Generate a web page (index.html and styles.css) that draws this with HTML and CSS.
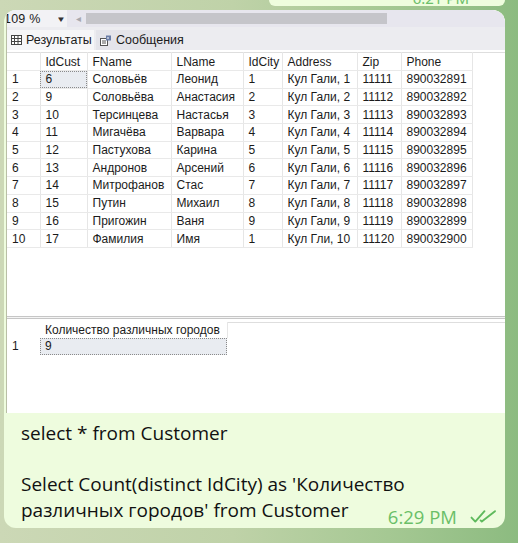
FILE: index.html
```html
<!DOCTYPE html>
<html lang="ru">
<head>
<meta charset="utf-8">
<title>Telegram — SSMS</title>
<link rel="stylesheet" href="styles.css">
</head>
<body>
<div class="wall">
  <div class="prev-bubble"><span class="prev-time">6:21 PM</span></div>
  <div class="bubble">
    <div class="shot">
      <div class="toolbar">
        <div class="zoombox"><span class="zoomval">109 %</span><span class="caret">▾</span></div>
        <span class="sarrow">◂</span>
        <div class="track"><div class="thumb"></div></div>
      </div>
      <div class="tabs">
        <div class="tab active">
          <svg class="ico" width="11" height="10" viewBox="0 0 11 10"><rect x="0.5" y="0.5" width="10" height="9" fill="#fff" stroke="#444"/><path d="M0.5 3.5h10M0.5 6.5h10M3.5 0.5v9M7 0.5v9" stroke="#444" stroke-width="1"/></svg>
          <span>Результаты</span>
        </div>
        <div class="tab">
          <svg class="ico" width="12" height="11" viewBox="0 0 12 11"><rect x="0.5" y="3.5" width="7" height="7" fill="#fff" stroke="#555"/><path d="M2 6h4M2 8h4" stroke="#555"/><rect x="6" y="0.5" width="5" height="5" fill="#6b7ea8"/><path d="M8 2v2" stroke="#fff"/></svg>
          <span>Сообщения</span>
        </div>
      </div>
      <div class="grid-pane">
        <table class="grid">
          <colgroup><col class="c-n"><col class="c-id"><col class="c-fn"><col class="c-ln"><col class="c-city"><col class="c-addr"><col class="c-zip"><col class="c-ph"><col class="c-rest"></colgroup>
          <thead><tr><th></th><th>IdCust</th><th>FName</th><th>LName</th><th>IdCity</th><th>Address</th><th>Zip</th><th>Phone</th><th class="rest"></th></tr></thead>
          <tbody>
            <tr><td>1</td><td class="sel">6</td><td>Соловьёв</td><td>Леонид</td><td>1</td><td>Кул Гали, 1</td><td>11111</td><td>890032891</td><td class="rest"></td></tr>
            <tr><td>2</td><td>9</td><td>Соловьёва</td><td>Анастасия</td><td>2</td><td>Кул Гали, 2</td><td>11112</td><td>890032892</td><td class="rest"></td></tr>
            <tr><td>3</td><td>10</td><td>Терсинцева</td><td>Настасья</td><td>3</td><td>Кул Гали, 3</td><td>11113</td><td>890032893</td><td class="rest"></td></tr>
            <tr><td>4</td><td>11</td><td>Мигачёва</td><td>Варвара</td><td>4</td><td>Кул Гали, 4</td><td>11114</td><td>890032894</td><td class="rest"></td></tr>
            <tr><td>5</td><td>12</td><td>Пастухова</td><td>Карина</td><td>5</td><td>Кул Гали, 5</td><td>11115</td><td>890032895</td><td class="rest"></td></tr>
            <tr><td>6</td><td>13</td><td>Андронов</td><td>Арсений</td><td>6</td><td>Кул Гали, 6</td><td>11116</td><td>890032896</td><td class="rest"></td></tr>
            <tr><td>7</td><td>14</td><td>Митрофанов</td><td>Стас</td><td>7</td><td>Кул Гали, 7</td><td>11117</td><td>890032897</td><td class="rest"></td></tr>
            <tr><td>8</td><td>15</td><td>Путин</td><td>Михаил</td><td>8</td><td>Кул Гали, 8</td><td>11118</td><td>890032898</td><td class="rest"></td></tr>
            <tr><td>9</td><td>16</td><td>Пригожин</td><td>Ваня</td><td>9</td><td>Кул Гали, 9</td><td>11119</td><td>890032899</td><td class="rest"></td></tr>
            <tr><td>10</td><td>17</td><td>Фамилия</td><td>Имя</td><td>1</td><td>Кул Гли, 10</td><td>11120</td><td>890032900</td><td class="rest"></td></tr>
          </tbody>
        </table>
      </div>
      <div class="splitter"></div>
      <div class="grid-pane second">
        <table class="grid grid2">
          <colgroup><col class="c-n"><col class="c-cnt"><col class="c-rest"></colgroup>
          <thead><tr><th class="nb"></th><th>Количество различных городов</th><th class="rest nb"></th></tr></thead>
          <tbody><tr><td class="nb">1</td><td class="sel">9</td><td class="rest nb"></td></tr></tbody>
        </table>
      </div>
    </div>
    <div class="msg">
      <p class="line">select * from Customer</p>
      <p class="line">&nbsp;</p>
      <p class="line">Select Count(distinct IdCity) as 'Количество</p>
      <div class="line last"><span>различных городов' from Customer</span><span class="meta"><span class="time">6:29 PM</span><svg class="checks" width="27" height="15" viewBox="0 0 27 15"><path d="M1.5 8.6l3.8 4L14.5 2.2M10.6 11.4l1.2 1.2L25 2.2" fill="none" stroke="#5fba5d" stroke-width="1.9" stroke-linecap="round" stroke-linejoin="round"/></svg></span></div>
    </div>
  </div>
</div>
</body>
</html>
```
FILE: styles.css
```css
html, body {
  margin: 0;
  padding: 0;
}
body {
  width: 518px;
  height: 543px;
  overflow: hidden;
  background: linear-gradient(90deg, #ccd8b6 0%, #bfd2a8 45%, #a5c893 75%, #8cbb80 100%);
  font-family: "Noto Sans", "Open Sans", sans-serif;
}
.wall {
  display: flex;
  flex-direction: column;
  padding-right: 13px;
}
.prev-bubble {
  align-self: flex-end;
  width: 236px;
  height: 6px;
  background: #effdde;
  border-radius: 0 0 12px 12px;
  overflow: hidden;
  position: relative;
}
.prev-time {
  position: absolute;
  right: 36px;
  top: -12px;
  font-size: 15px;
  color: #6cbf6a;
}
.bubble {
  margin: 4px 0 0 4px;
  width: 501px;
  background: #eefcde;
  border-radius: 12px;
  overflow: hidden;
}
.shot {
  margin-left: 2px;
  height: 403px;
  background: #fff;
  border-left: 1px solid #b9bfa6;
  border-top-left-radius: 4px;
  border-top-right-radius: 12px;
  overflow: hidden;
  display: flex;
  flex-direction: column;
  font-family: "Liberation Sans", "Noto Sans", sans-serif;
  color: #1b1b1b;
}
.toolbar {
  height: 17px;
  flex: none;
  background: #e7e6ee;
  display: flex;
  align-items: center;
}
.zoombox {
  width: 60px;
  height: 17px;
  background: #f2f2f5;
  display: flex;
  align-items: center;
  justify-content: space-between;
  padding-right: 3px;
  font-size: 12.5px;
  margin-left: -3px;
}
.zoomval {
  letter-spacing: 0.2px;
}
.caret {
  font-size: 9px;
  color: #333;
  transform: scaleX(1.3);
}
.sarrow {
  font-size: 10px;
  color: #a8a8ae;
  margin-left: 9px;
  width: 10px;
}
.track {
  flex: 1;
  height: 11px;
  display: flex;
}
.thumb {
  width: 301px;
  height: 11px;
  background: #c5c5ca;
}
.tabs {
  height: 23px;
  flex: none;
  background: #ececf0;
  display: flex;
  align-items: flex-end;
}
.tab {
  height: 20px;
  display: flex;
  align-items: center;
  gap: 4px;
  padding: 0 4px;
  font-size: 12.5px;
  background: #e4e4ea;
  margin-right: 2px;
}
.tab.active {
  background: #f6f6f8;
  width: 79px;
}
.tab:not(.active) {
  width: 76px;
}
.ico {
  flex: none;
}
.grid-pane {
  height: 264px;
  flex: none;
  background: #fff;
  padding-top: 2px;
}
.grid-pane.second {
  flex: 1;
  padding-top: 3px;
}
.splitter {
  height: 1px;
  flex: none;
  border-top: 1px solid #c6c6c6;
  border-bottom: 1px solid #c6c6c6;
  background: #f4f4f4;
}
.grid {
  border-collapse: collapse;
  table-layout: fixed;
  width: 498px;
  font-size: 12px;
}
.grid th, .grid td {
  height: 16.7px;
  padding: 0 0 0 5px;
  text-align: left;
  font-weight: normal;
  border-right: 1px solid #e6e6e6;
  border-bottom: 1px solid #e9e9e9;
  white-space: nowrap;
  overflow: hidden;
}
.grid thead th {
  height: 17px;
  border-top: 1px solid #dedede;
}
.grid .rest {
  border-right: none;
  border-bottom: none;
}
.grid thead .rest {
  border-top: 1px solid #dedede;
}
.grid .sel {
  background: #e9ecf1;
  outline: 1px dotted #8a8a8a;
  outline-offset: -1px;
}
.grid2 .nb {
  border: none;
}
.grid2 thead th {
  border-top: none;
  height: 15px;
}
.grid2 th, .grid2 td {
  border-bottom: none;
}
.grid2 td.sel {
  border-right: none;
}
.c-n { width: 33px; }
.c-id { width: 47px; }
.c-fn { width: 84px; }
.c-ln { width: 72px; }
.c-city { width: 39px; }
.c-addr { width: 75px; }
.c-zip { width: 44px; }
.c-ph { width: 71px; }
.c-cnt { width: 187px; }
.c-rest { width: auto; }
.msg {
  padding: 8px 8px 5px 17px;
  font-family: "Open Sans", "Noto Sans", sans-serif;
  font-size: 19px;
  color: #111;
}
.line {
  margin: 0;
  line-height: 25.5px;
  white-space: nowrap;
}
.line.last {
  display: flex;
  align-items: flex-start;
  height: 25.5px;
}
.meta {
  margin-left: auto;
  margin-top: 8px;
  display: flex;
  align-items: center;
  gap: 13px;
  line-height: 22px;
}
.time {
  color: #6abf68;
  font-size: 18.5px;
}
.checks {
  display: block;
}
```
